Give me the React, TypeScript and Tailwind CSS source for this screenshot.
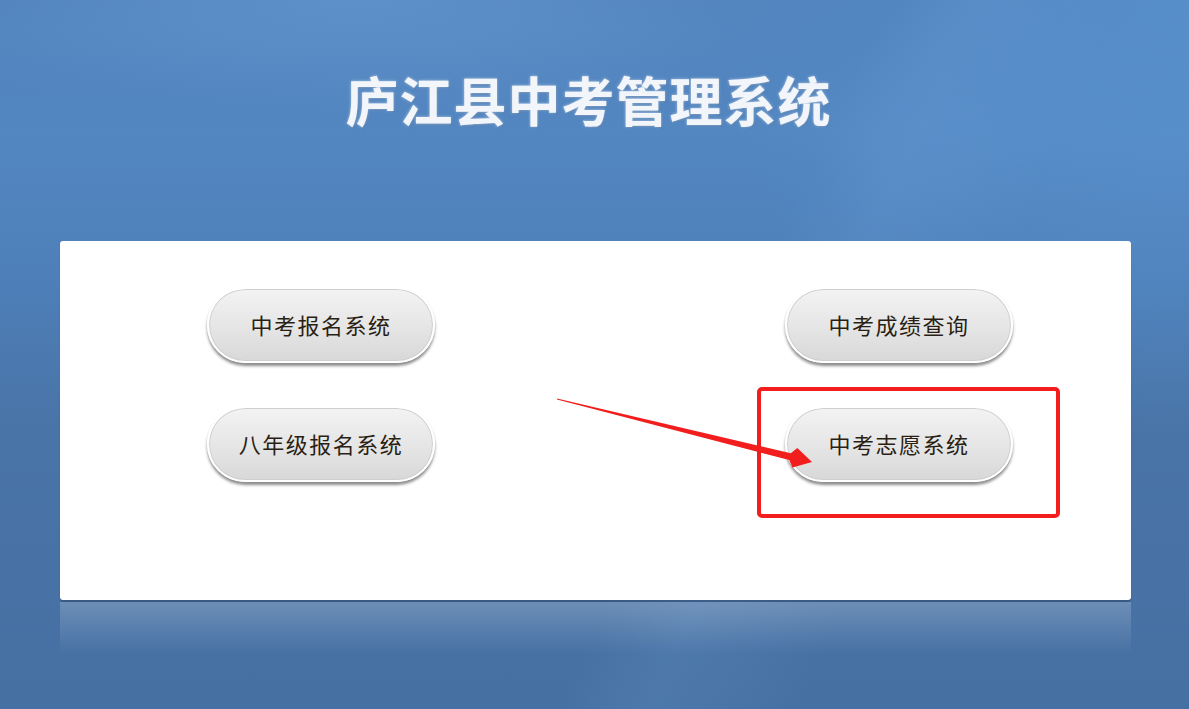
import React from "react";

/* ── Data ── */

const LEFT = ["中考报名系统", "八年级报名系统"];
const RIGHT = ["中考成绩查询", "中考志愿系统"];

/* ── Pill button ── */

function PillButton({ label }: { label: string }) {
  return (
    <button className="flex h-[76px] w-[228px] items-center justify-center rounded-full border-2 border-white bg-[linear-gradient(180deg,#f3f3f3_0%,#e6e5e5_55%,#d9d8d8_100%)] pb-[2px] text-[22px] tracking-[1.5px] text-[#2a1f14] shadow-[0_3px_3px_rgba(0,0,0,0.45),inset_0_0_0_1px_#cfcfcf] [font-family:'Noto_Sans_CJK_SC',sans-serif]">
      {label}
    </button>
  );
}

/* ── Arrow overlay ── */

function Annotation() {
  return (
    <svg
      className="pointer-events-none absolute left-0 top-0"
      width="1189"
      height="709"
      viewBox="0 0 1189 709"
    >
      <rect
        x="759"
        y="389"
        width="299"
        height="127"
        rx="3"
        fill="none"
        stroke="#f21d1d"
        strokeWidth="4"
      />
      <polygon
        points="557,398.4 790.8,453.2 797.3,448.1 812,462 792.5,467.5 789.2,460 557,399.6"
        fill="#f21d1d"
      />
    </svg>
  );
}

/* ── Main ── */

export default function App() {
  return (
    <div className="relative h-[730px] w-full overflow-hidden bg-[radial-gradient(ellipse_45%_16%_at_30%_0%,rgba(130,180,235,0.3),transparent_100%),radial-gradient(ellipse_40%_60%_at_100%_0%,rgba(95,160,220,0.45),transparent_100%),linear-gradient(115deg,transparent_58%,rgba(140,190,240,0.1)_64%,transparent_74%),linear-gradient(180deg,#4f80ba_0%,#5387c1_18%,#4e7fb8_38%,#4974a8_58%,#4670a2_100%)]">
      {/* Title */}
      <div className="flex justify-center pr-[12px] pt-[66px]">
        <h1 className="text-[53px] font-bold leading-[66px] tracking-[1px] text-[#f2f6fb] [font-family:'Noto_Sans_CJK_SC',sans-serif] [text-shadow:0_0_3px_rgba(230,240,255,0.7),1px_1px_2px_rgba(40,70,110,0.4)]">
          庐江县中考管理系统
        </h1>
      </div>

      {/* Panel */}
      <div className="mx-[60px] mt-[109px] w-[1071px]">
        <div className="h-[359px] rounded-[3px] bg-white pl-[147px] pr-[118px] pt-[46px] shadow-[0_2px_1px_rgba(40,60,90,0.45)]">
          <div className="flex justify-between">
            <div className="flex flex-col gap-[43px]">
              {LEFT.map((l) => (
                <PillButton key={l} label={l} />
              ))}
            </div>
            <div className="flex flex-col gap-[43px]">
              {RIGHT.map((l) => (
                <PillButton key={l} label={l} />
              ))}
            </div>
          </div>
        </div>
        {/* Reflection */}
        <div className="mt-[2px] h-[52px] bg-[linear-gradient(180deg,rgba(255,255,255,0.2)_0%,rgba(255,255,255,0.09)_55%,rgba(255,255,255,0)_100%)]" />
      </div>

      {/* Footer */}
      <div className="mt-[52px] flex justify-center pr-[95px] text-[14px] tracking-[10px] text-[#1f2d40] [font-family:'Noto_Sans_CJK_SC',sans-serif]">
        [首页 考试说明 返回]
      </div>

      <Annotation />
    </div>
  );
}
